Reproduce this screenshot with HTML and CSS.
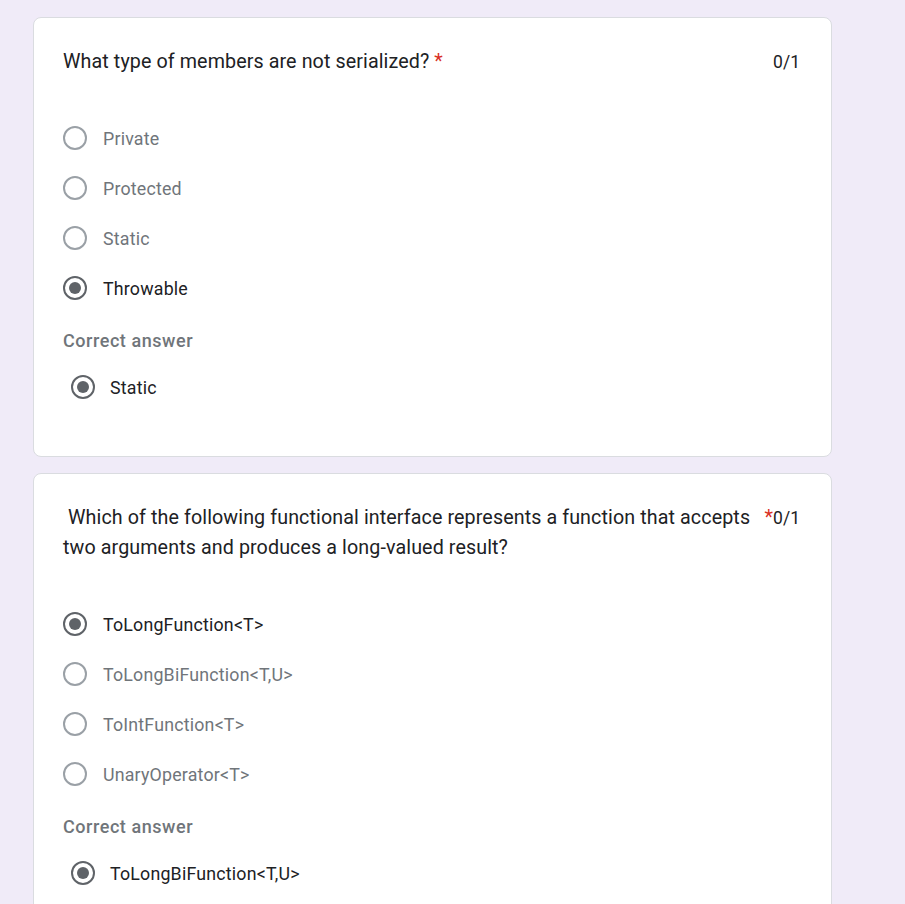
FILE: index.html
```html
<!DOCTYPE html>
<html>
<head>
<meta charset="utf-8">
<link rel="stylesheet" href="styles.css">
</head>
<body>
<div class="page">
  <div class="card">
    <div class="title-row">
      <div class="title">What type of members are not serialized? <span class="req">*</span></div>
      <div class="score">0/1</div>
    </div>
    <div class="options">
      <div class="option"><span class="radio"></span><span class="label">Private</span></div>
      <div class="option"><span class="radio"></span><span class="label">Protected</span></div>
      <div class="option"><span class="radio"></span><span class="label">Static</span></div>
      <div class="option selected"><span class="radio"></span><span class="label">Throwable</span></div>
    </div>
    <div class="correct-title">Correct answer</div>
    <div class="option correct selected"><span class="radio"></span><span class="label">Static</span></div>
  </div>

  <div class="card">
    <div class="title-row">
      <div class="title">&nbsp;Which of the following functional interface represents a function that accepts two arguments and produces a long-valued result?</div>
      <span class="req req-side">*</span>
      <div class="score">0/1</div>
    </div>
    <div class="options">
      <div class="option selected"><span class="radio"></span><span class="label">ToLongFunction&lt;T&gt;</span></div>
      <div class="option"><span class="radio"></span><span class="label">ToLongBiFunction&lt;T,U&gt;</span></div>
      <div class="option"><span class="radio"></span><span class="label">ToIntFunction&lt;T&gt;</span></div>
      <div class="option"><span class="radio"></span><span class="label">UnaryOperator&lt;T&gt;</span></div>
    </div>
    <div class="correct-title">Correct answer</div>
    <div class="option correct selected"><span class="radio"></span><span class="label">ToLongBiFunction&lt;T,U&gt;</span></div>
  </div>
</div>
</body>
</html>
```

FILE: styles.css
```css
html, body {
  margin: 0;
  padding: 0;
  background: #f0ebf8;
  font-family: Roboto, "Liberation Sans", Arial, sans-serif;
  color: #202124;
}

.page {
  padding: 17px 0 40px 33px;
  display: flex;
  flex-direction: column;
  gap: 16px;
}

.card {
  box-sizing: border-box;
  width: 799px;
  background: #ffffff;
  border: 1px solid #dadce0;
  border-radius: 8px;
  padding: 29px 31px 44px 29px;
}

.title-row {
  display: flex;
  align-items: flex-start;
  margin-bottom: 36px;
}

.title {
  flex: 0 1 auto;
  font-size: 19.7px;
  line-height: 30px;
  letter-spacing: 0.1px;
  color: #202124;
}

.req {
  color: #d93025;
}

.req-side {
  font-size: 19.7px;
  line-height: 30px;
  padding-left: 12px;
  flex: none;
}

.score {
  margin-left: auto;
  flex: none;
  font-size: 17.5px;
  line-height: 30px;
  color: #202124;
}

.options {
  display: flex;
  flex-direction: column;
}

.option {
  height: 50px;
  display: flex;
  align-items: center;
  gap: 16px;
}

.radio {
  box-sizing: border-box;
  width: 24px;
  height: 24px;
  border-radius: 50%;
  border: 2px solid #9aa0a6;
  flex: none;
  display: flex;
  align-items: center;
  justify-content: center;
}

.option.selected .radio {
  border-color: #5f6368;
}

.option.selected .radio::after {
  content: "";
  width: 12px;
  height: 12px;
  border-radius: 50%;
  background: #5f6368;
}

.label {
  font-size: 17.8px;
  letter-spacing: 0.2px;
  color: #70757a;
}

.option.selected .label {
  color: #202124;
}

.correct-title {
  margin-top: 16px;
  font-size: 18px;
  font-weight: 500;
  line-height: 24px;
  color: #70757a;
  letter-spacing: 0.55px;
}

.option.correct {
  margin-top: 9px;
  padding-left: 8px;
  gap: 15px;
}
```
